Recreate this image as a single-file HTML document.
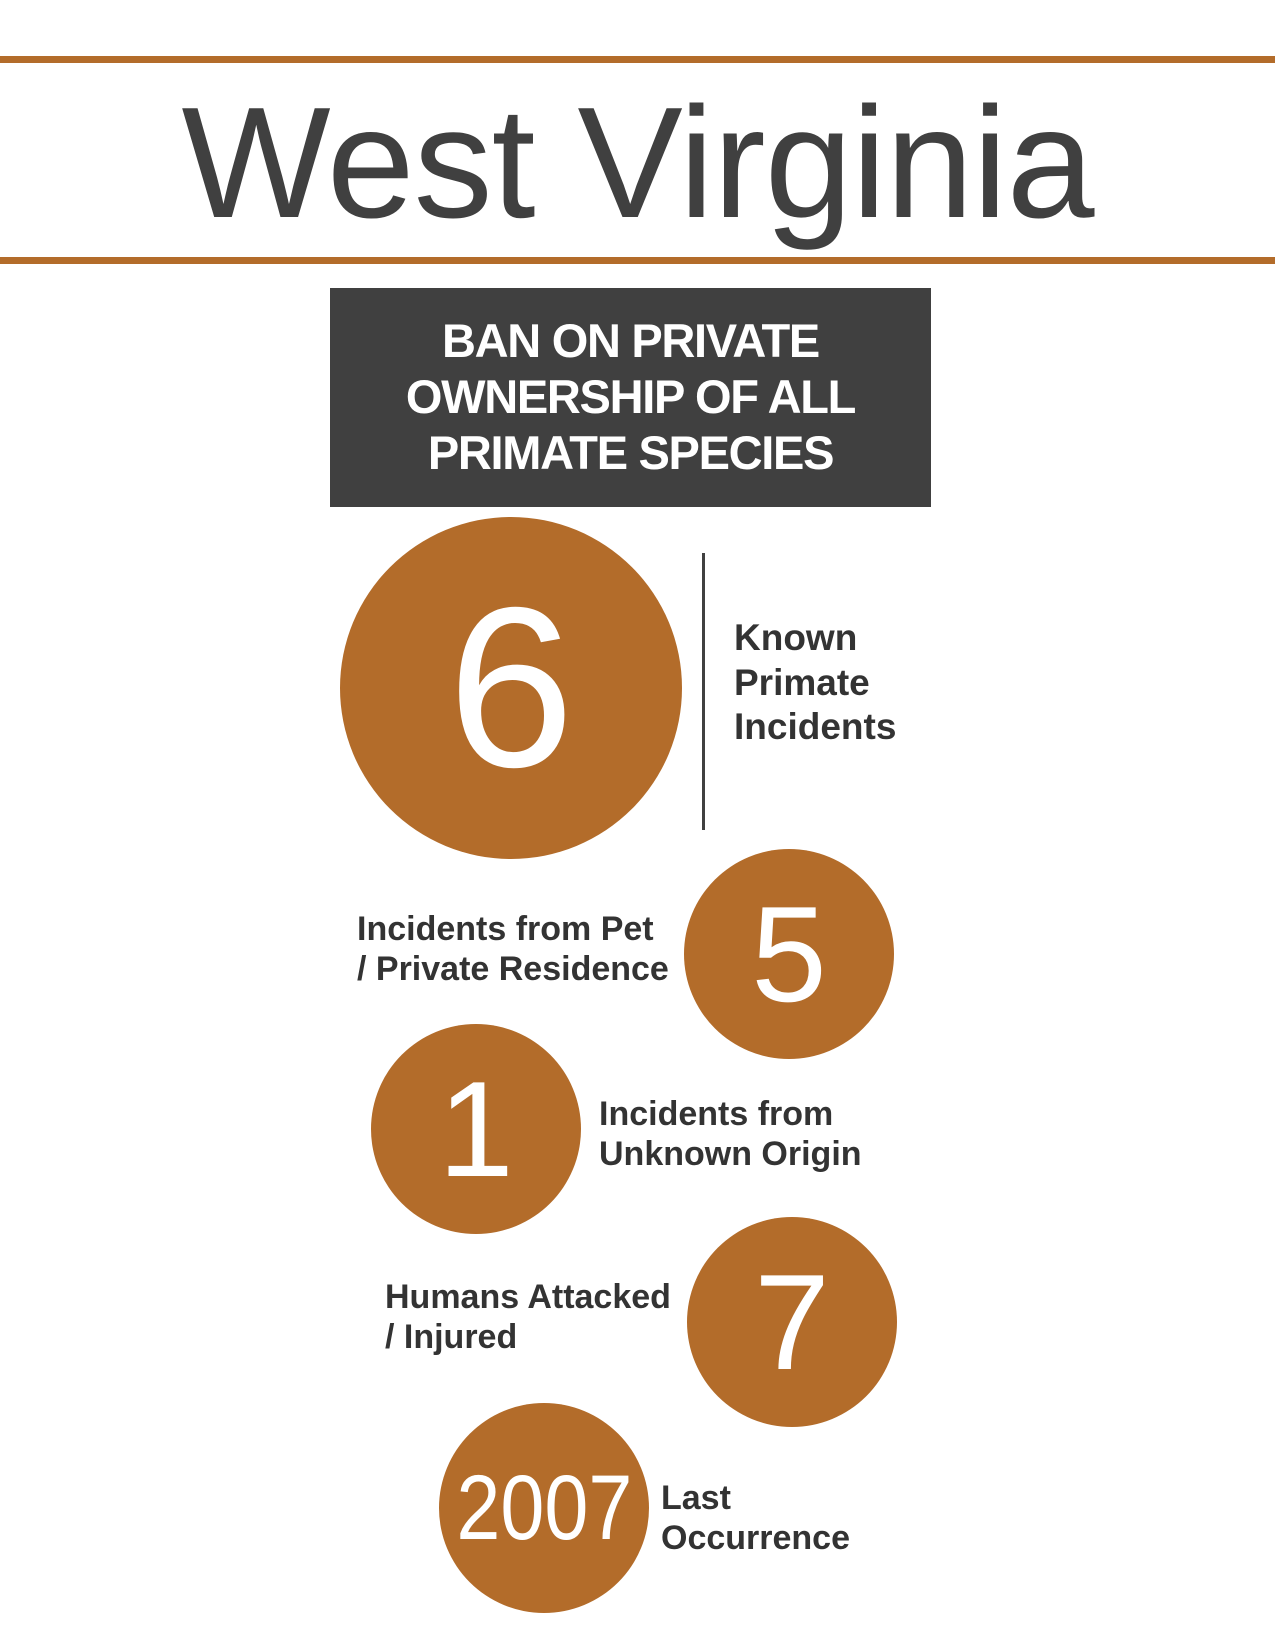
<!DOCTYPE html>
<html><head><meta charset="utf-8"><style>
*{margin:0;padding:0}
body{width:1275px;height:1650px;background:#fff;position:relative;overflow:hidden;font-family:"Liberation Sans",sans-serif;color:#333}
.ab{position:absolute}
.line{left:0;width:1275px;height:7px;background:#B36C2A}
.c{position:absolute;border-radius:50%;background:#B36C2A;color:#fff;display:flex;align-items:center;justify-content:center}
.lab{position:absolute;font-weight:bold;font-size:34px;line-height:40px;white-space:nowrap;color:#333}
</style></head><body>
<div class="ab line" style="top:56px"></div>
<div class="ab line" style="top:257px"></div>
<div class="ab" style="left:0;width:1275px;top:73px;text-align:center;font-size:158px;line-height:180px;color:#404040;letter-spacing:-1px">West Virginia</div>
<div class="ab" style="left:330px;top:288px;width:601px;height:219px;background:#404040;color:#fff;font-weight:bold;font-size:47px;letter-spacing:-1.3px;text-align:center;line-height:56px;padding-top:25px;box-sizing:border-box">BAN ON PRIVATE<br>OWNERSHIP OF ALL<br>PRIMATE SPECIES</div>
<div class="c" style="left:340px;top:517px;width:342px;height:342px;font-size:228px;line-height:1">6</div>
<div class="ab" style="left:702px;top:553px;width:3px;height:277px;background:#404040"></div>
<div class="lab" style="left:734px;top:616px;font-size:37px;line-height:44.5px">Known<br>Primate<br>Incidents</div>
<div class="c" style="left:684px;top:849px;width:210px;height:210px;font-size:136px">5</div>
<div class="lab" style="left:357px;top:909px">Incidents from Pet<br>/ Private Residence</div>
<div class="c" style="left:371px;top:1024px;width:210px;height:210px;font-size:136px">1</div>
<div class="lab" style="left:599px;top:1094px">Incidents from<br>Unknown Origin</div>
<div class="c" style="left:687px;top:1217px;width:210px;height:210px;font-size:136px">7</div>
<div class="lab" style="left:385px;top:1277px">Humans Attacked<br>/ Injured</div>
<div class="c" style="left:439px;top:1403px;width:210px;height:210px;font-size:92px"><span style="display:inline-block;transform:scaleX(0.86)">2007</span></div>
<div class="lab" style="left:661px;top:1478px">Last<br>Occurrence</div>
</body></html>
